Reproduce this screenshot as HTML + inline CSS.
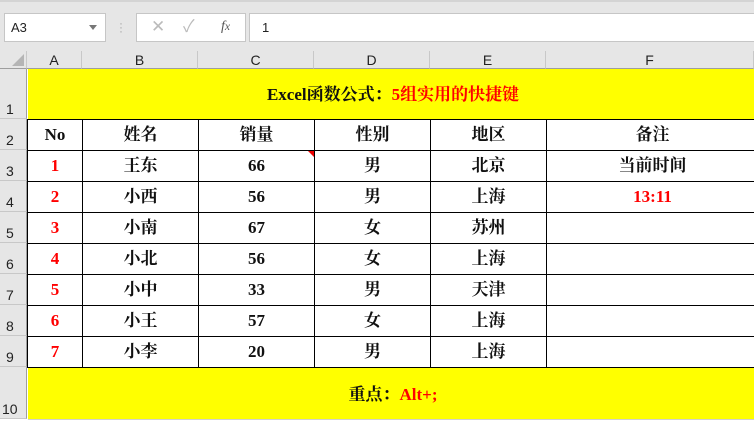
<!DOCTYPE html>
<html><head><meta charset="utf-8"><style>
*{margin:0;padding:0;box-sizing:border-box}
body{width:754px;height:422px;overflow:hidden;background:#fff;position:relative;font-family:"Liberation Sans","Noto Sans CJK SC",sans-serif}
.top{position:absolute;left:0;top:0;width:754px;height:51px;background:#e6e6e6;border-top:2px solid #d4d4d4}
.box{position:absolute;background:#fff;border:1px solid #c6c6c6}
.ch{position:absolute;top:51px;height:18px;background:#e6e6e6;font-size:14px;color:#222;text-align:center;line-height:19px;border-right:1px solid #c8c8c8;border-bottom:1px solid #9e9e9e}
.rh{position:absolute;left:0;width:27px;background:#e6e6e6;font-size:14px;color:#222;border-bottom:1px solid #c8c8c8;border-right:1px solid #9e9e9e;padding-left:6px}
table{position:absolute;left:27px;top:69px;width:731px;table-layout:fixed;border-collapse:collapse;font-family:"Liberation Serif","Noto Serif CJK SC",serif;font-weight:bold;font-size:17px;color:#111}
td{text-align:center;border:1px solid #000;height:31px;padding:0;line-height:29px}
td.y{background:#ff0;border:none;border-bottom:1px solid #000;height:50px;padding-top:2px}
.r{color:#f00}
</style></head><body>
<div class="top">
 <div class="box" style="left:4px;top:11px;width:102px;height:29px;font-size:13px;line-height:27px;padding-left:6px;color:#222">A3<span style="position:absolute;right:8px;top:11px;border:4px solid transparent;border-top:5px solid #777"></span></div>
 <div style="position:absolute;left:119px;top:19px;color:#aaa;font-size:12px;line-height:4px">·<br>·<br>·</div>
 <div class="box" style="left:136px;top:11px;width:110px;height:29px;color:#bbb;font-size:17px;line-height:26px"><span style="position:absolute;left:14px">✕</span><span style="position:absolute;left:46px">✓</span><span style="position:absolute;left:84px;color:#555;font-family:'Liberation Serif',serif;font-style:italic;font-size:14px">f<small>x</small></span></div>
 <div class="box" style="left:249px;top:11px;width:506px;height:29px;font-size:13px;line-height:27px;padding-left:12px;color:#222">1</div>
</div>
<div class="ch" style="left:0;width:27px"><span style="position:absolute;right:2px;bottom:2px;border-left:12px solid transparent;border-bottom:12px solid #b5b5b5"></span></div>
<div class="ch" style="left:27px;width:55px">A</div>
<div class="ch" style="left:82px;width:116px">B</div>
<div class="ch" style="left:198px;width:116px">C</div>
<div class="ch" style="left:314px;width:116px">D</div>
<div class="ch" style="left:430px;width:116px">E</div>
<div class="ch" style="left:546px;width:208px">F</div>
<div class="rh" style="top:69px;height:50px;padding-top:32px">1</div>
<div class="rh" style="top:119px;height:31px;padding-top:13px">2</div>
<div class="rh" style="top:150px;height:31px;padding-top:13px">3</div>
<div class="rh" style="top:181px;height:31px;padding-top:13px">4</div>
<div class="rh" style="top:212px;height:31px;padding-top:13px">5</div>
<div class="rh" style="top:243px;height:31px;padding-top:13px">6</div>
<div class="rh" style="top:274px;height:31px;padding-top:13px">7</div>
<div class="rh" style="top:305px;height:31px;padding-top:13px">8</div>
<div class="rh" style="top:336px;height:31px;padding-top:13px">9</div>
<div class="rh" style="top:367px;height:52px;padding-top:34px;padding-left:2px">10</div>
<table>
<colgroup><col style="width:55px"><col style="width:116px"><col style="width:116px"><col style="width:116px"><col style="width:116px"><col style="width:212px"></colgroup>
<tr><td class="y" colspan="6">Excel函数公式：<span class="r">5组实用的快捷键</span></td></tr>
<tr><td>No</td><td>姓名</td><td>销量</td><td>性别</td><td>地区</td><td>备注</td></tr>
<tr><td class="r">1</td><td>王东</td><td style="position:relative">66<span style="position:absolute;right:0;top:0;border-left:6px solid transparent;border-top:6px solid #e00"></span></td><td>男</td><td>北京</td><td>当前时间</td></tr>
<tr><td class="r">2</td><td>小西</td><td>56</td><td>男</td><td>上海</td><td class="r">13:11</td></tr>
<tr><td class="r">3</td><td>小南</td><td>67</td><td>女</td><td>苏州</td><td></td></tr>
<tr><td class="r">4</td><td>小北</td><td>56</td><td>女</td><td>上海</td><td></td></tr>
<tr><td class="r">5</td><td>小中</td><td>33</td><td>男</td><td>天津</td><td></td></tr>
<tr><td class="r">6</td><td>小王</td><td>57</td><td>女</td><td>上海</td><td></td></tr>
<tr><td class="r">7</td><td>小李</td><td>20</td><td>男</td><td>上海</td><td></td></tr>
<tr><td class="y" colspan="6" style="height:52px;border-bottom:1px solid #d0d0d0">重点：<span class="r">Alt+;</span></td></tr>
</table>
</body></html>
